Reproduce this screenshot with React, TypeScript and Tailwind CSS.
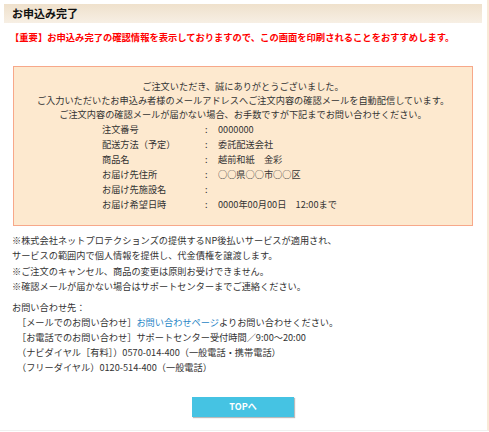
const rows: [string, string][] = [
  ["注文番号", "0000000"],
  ["配送方法（予定）", "委託配送会社"],
  ["商品名", "越前和紙　金彩"],
  ["お届け先住所", "○○県○○市○○区"],
  ["お届け先施設名", ""],
  ["お届け希望日時", "0000年00月00日　12:00まで"],
];

export default function App() {
  return (
    <div
      className="w-[489px] h-[432px] bg-white overflow-hidden text-[#333]"
      style={{ fontFamily: '"Noto Sans CJK JP", "Noto Sans", sans-serif' }}
    >
      <div className="w-[489px] h-[431px] border-r-2 border-[#f9e9d6] border-b border-b-[#f0f0f0] pt-[4px]">
        {/* Heading bar */}
        <div className="ml-[4px] mr-[5px] h-[19px] flex items-center pl-[8px] bg-gradient-to-b from-[#efe1cc] to-[#f7efe4]">
          <h1 className="text-[11px] font-bold leading-none text-[#111]">お申込み完了</h1>
        </div>

        <p className="mt-[7px] pl-[10px] text-[9.3px] leading-[14px] font-bold text-[#f00] whitespace-nowrap">
          【重要】お申込み完了の確認情報を表示しておりますので、この画面を印刷されることをおすすめします。
        </p>

        {/* Order box */}
        <div className="mt-[22px] ml-[13px] mr-[14px] border border-[#f7a88a] bg-[#fde9cf] pt-[12px] pb-[13px] text-[9.2px]">
          <div className="text-center leading-[14px] whitespace-nowrap">
            <p>ご注文いただき、誠にありがとうございました。</p>
            <p>ご入力いただいたお申込み者様のメールアドレスへご注文内容の確認メールを自動配信しています。</p>
            <p>ご注文内容の確認メールが届かない場合、お手数ですが下記までお問い合わせください。</p>
          </div>
          <div className="mt-[1px] ml-[88px] grid grid-cols-[103px_13px_1fr] leading-[15px]">
            {rows.map(([label, value]) => (
              <div key={label} className="contents">
                <span>{label}</span>
                <span>:</span>
                <span className="whitespace-nowrap">{value}</span>
              </div>
            ))}
          </div>
        </div>

        {/* Notes */}
        <div className="mt-[7px] pl-[12px] text-[9.2px] leading-[15.3px] whitespace-nowrap">
          <p>※株式会社ネットプロテクションズの提供するNP後払いサービスが適用され、</p>
          <p>サービスの範囲内で個人情報を提供し、代金債権を譲渡します。</p>
          <p>※ご注文のキャンセル、商品の変更は原則お受けできません。</p>
          <p>※確認メールが届かない場合はサポートセンターまでご連絡ください。</p>
        </div>

        <div className="mt-[6px] pl-[12px] text-[9.2px] leading-[15px] whitespace-nowrap">
          <p>お問い合わせ先：</p>
          <div className="pl-[5px]">
            <p>
              ［メールでのお問い合わせ］
              <a href="#" className="text-[#1f86c6]">お問い合わせページ</a>
              よりお問い合わせください。
            </p>
            <p>［お電話でのお問い合わせ］サポートセンター受付時間／9:00～20:00</p>
            <p>（ナビダイヤル［有料］）0570-014-400（一般電話・携帯電話）</p>
            <p>（フリーダイヤル）0120-514-400（一般電話）</p>
          </div>
        </div>

        <div className="mt-[22px] flex justify-center pr-[1px]">
          <button className="w-[102px] h-[20px] bg-[#45c3e3] text-white text-[9px] font-bold shadow-[1px_1px_1px_#bbbbbb] flex items-center justify-center">
            TOPへ
          </button>
        </div>
      </div>
    </div>
  );
}
